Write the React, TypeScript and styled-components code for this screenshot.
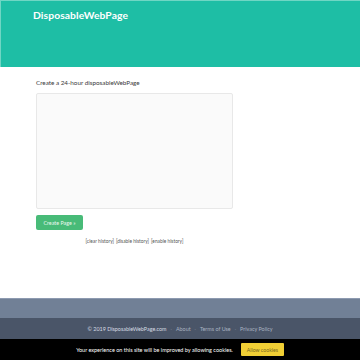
import styled, { createGlobalStyle } from "styled-components"

const GlobalStyle = createGlobalStyle`
  body {
    margin: 0;
    font-family: Lato, "Open Sans", sans-serif;
    background: #ffffff;
  }
`

const Page = styled.div`
  min-height: 360px;
  display: flex;
  flex-direction: column;
`

const Header = styled.header`
  height: 66px;
  background: #1ebea5;
  border-top: 1px solid #6fd6c4;
  border-left: 1px solid #6fd6c4;
  box-sizing: content-box;
  padding-left: 32px;
`

const Brand = styled.h1`
  margin: 0;
  padding-top: 8px;
  font-size: 10.3px;
  font-weight: 700;
  line-height: 13px;
  color: #ffffff;
  letter-spacing: 0.1px;
`

const Main = styled.main`
  flex: 1;
  padding: 11px 0 0 36px;
`

const Column = styled.div`
  width: 197px;
  display: flex;
  flex-direction: column;
`

const Label = styled.label`
  font-size: 6.3px;
  line-height: 9px;
  color: #3a3a3a;
  margin-bottom: 6px;
`

const Editor = styled.textarea`
  width: 197px;
  height: 116px;
  box-sizing: border-box;
  background: #fafafa;
  border: 1px solid #e8e8e8;
  border-radius: 2px;
  resize: none;
  outline: none;
`

const CreateButton = styled.button`
  align-self: flex-start;
  margin-top: 6px;
  width: 47px;
  height: 15px;
  padding: 0;
  border: none;
  border-radius: 2px;
  background: #48bb78;
  color: #e8f7ee;
  font-family: inherit;
  font-size: 5.4px;
`

const HistoryLinks = styled.div`
  margin-top: 8px;
  display: flex;
  justify-content: center;
  gap: 2px;
  font-size: 4.8px;
  color: #555555;
`

const FooterBand = styled.div`
  height: 19px;
  background: #718096;
  border-top: 1px solid #8d9ab0;
`

const FooterRow = styled.footer`
  height: 21px;
  background: #4a5568;
  display: flex;
  align-items: center;
  justify-content: center;
  gap: 4px;
  font-size: 5.4px;
  color: #a9b2c0;
`

const Copy = styled.span`
  color: #d6dbe3;
`

const Dot = styled.span`
  color: #6f7a8b;
`

const CookieBar = styled.div`
  height: 21px;
  background: #000000;
  display: flex;
  align-items: center;
  justify-content: center;
  gap: 8px;
  font-size: 5.5px;
  color: #ffffff;
`

const CookieButton = styled.button`
  width: 43px;
  height: 13px;
  padding: 0;
  border: none;
  border-radius: 1px;
  background: #f1cf35;
  color: #7a6a20;
  font-family: inherit;
  font-size: 5.2px;
`

export default function App() {
  return (
    <Page>
      <GlobalStyle />
      <Header>
        <Brand>DisposableWebPage</Brand>
      </Header>
      <Main>
        <Column>
          <Label>Create a 24-hour disposableWebPage</Label>
          <Editor />
          <CreateButton>Create Page »</CreateButton>
          <HistoryLinks>
            <span>[clear history]</span>
            <span>[disable history]</span>
            <span>[enable history]</span>
          </HistoryLinks>
        </Column>
      </Main>
      <FooterBand />
      <FooterRow>
        <Copy>© 2019 DisposableWebPage.com</Copy>
        <Dot>·</Dot>
        <span>About</span>
        <Dot>·</Dot>
        <span>Terms of Use</span>
        <Dot>·</Dot>
        <span>Privacy Policy</span>
      </FooterRow>
      <CookieBar>
        <span>Your experience on this site will be improved by allowing cookies.</span>
        <CookieButton>Allow cookies</CookieButton>
      </CookieBar>
    </Page>
  )
}
